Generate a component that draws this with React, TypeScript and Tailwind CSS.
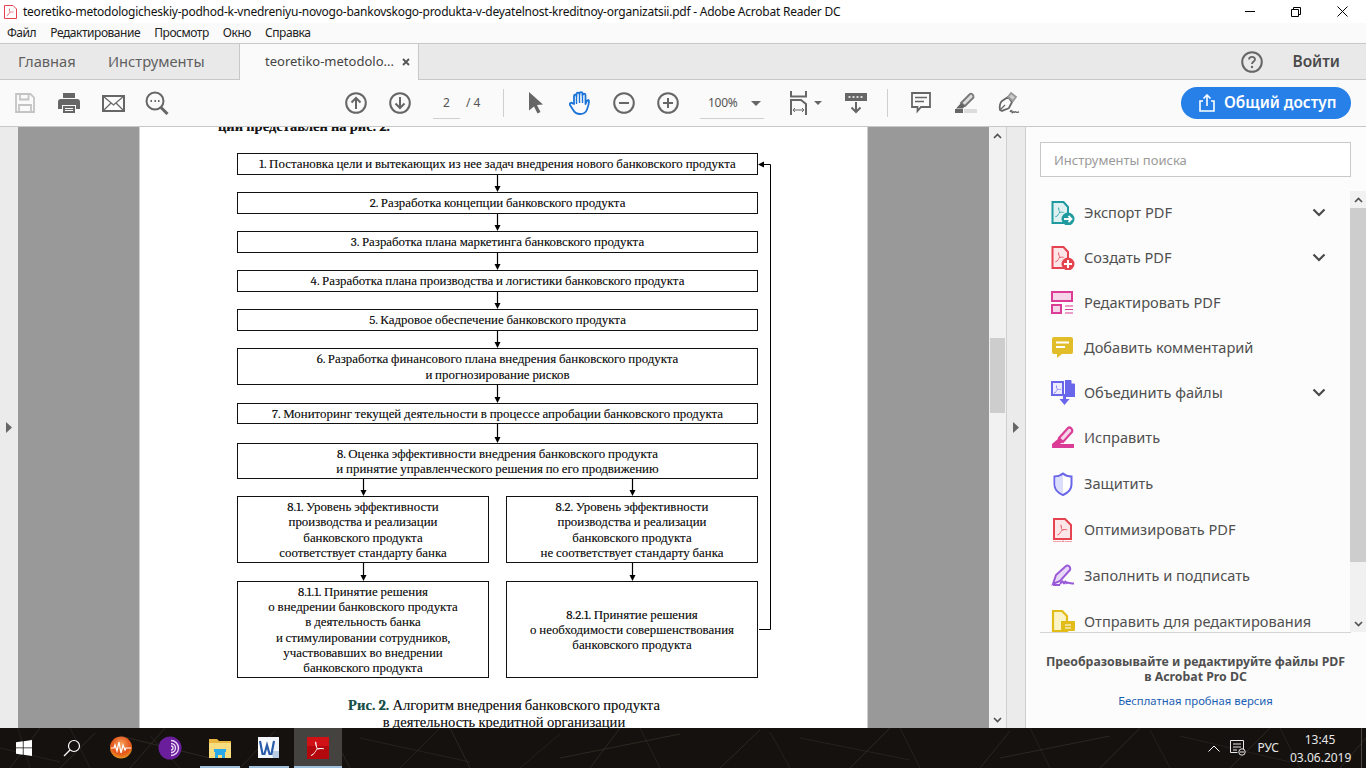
import React from "react";

const ui = "font-sans [font-family:Noto_Sans,Open_Sans,sans-serif]";
const GRAY = "#666666";

function PdfGlyph({ x = 0, y = 0, s = 1, c = "#e0e0e0" }: { x?: number; y?: number; s?: number; c?: string }) {
  return (
    <path
      transform={`translate(${x} ${y}) scale(${s})`}
      d="M5 0.5c-1 0-.8 3 1 6.5-1 2.5-3 5.5-5 6-1 .4-.8 1.5.3 1 1.7-.8 3.5-3 4.9-5.8 2.5-.8 4-.8 6-.4 1 .1 1-1 0-1-1.700-.2-3.600-.4-5.500.2C5.800 5 5.800.5 5 .5z"
      fill={c}
    />
  );
}

function ToolBtn({ children, w = 44 }: { children: React.ReactNode; w?: number }) {
  return (
    <div className="flex items-center justify-center h-full shrink-0" style={{ width: w }}>
      {children}
    </div>
  );
}

function CircleIcon({ kind }: { kind: "up" | "down" | "minus" | "plus" }) {
  return (
    <svg width="22" height="22" viewBox="0 0 22 22" fill="none" stroke={GRAY} strokeWidth="2">
      <circle cx="11" cy="11" r="9.800" />
      {kind === "up" && <path d="M11 17V6M6.500 10.500 11 6l4.500 4.500" />}
      {kind === "down" && <path d="M11 5v11M6.500 11.500 11 16l4.500-4.500" />}
      {(kind === "minus" || kind === "plus") && <path d="M6 11h10" />}
      {kind === "plus" && <path d="M11 6v10" />}
    </svg>
  );
}

function Arrow({ h }: { h: number }) {
  return (
    <svg width="9" height={h} viewBox={`0 0 9 ${h}`} className="block shrink-0">
      <path d={`M4.500 0V${h - 4}`} stroke="#000" strokeWidth="1.200" />
      <path d={`M1.500 ${h - 6}h6L4.500 ${h}z`} fill="#000" />
    </svg>
  );
}

function Box({ lines, h, w = 521 }: { lines: string[]; h: number; w?: number }) {
  return (
    <div
      className="border border-[#111] flex flex-col items-center justify-center text-center shrink-0 bg-white"
      style={{ height: h, width: w }}
    >
      {lines.map((l) => (
        <div key={l} className="leading-[15.200px] whitespace-nowrap">
          {l}
        </div>
      ))}
    </div>
  );
}

const PRODUCT = "банковского продукта";

function Document() {
  return (
    <div className="relative w-[729px] shrink-0 h-full bg-white border-x border-[#d0d0d0] overflow-hidden font-serif [font-family:Liberation_Serif,serif] text-[12.900px] text-[#161616] [text-shadow:0_0_0.5px_rgba(0,0,0,0.4)]">
      <div className="ml-[78px] -mt-[8px] h-[34px] text-[14.500px] font-bold leading-[16px] whitespace-nowrap">ции представлен на рис. 2.</div>
      <div className="ml-[97px] w-[521px] flex flex-col items-center">
        <Box h={22} lines={[`1. Постановка цели и вытекающих из нее задач внедрения нового ${PRODUCT}`]} />
        <Arrow h={17} />
        <Box h={22} lines={[`2. Разработка концепции ${PRODUCT}`]} />
        <Arrow h={17} />
        <Box h={22} lines={[`3. Разработка плана маркетинга ${PRODUCT}`]} />
        <Arrow h={17} />
        <Box h={22} lines={[`4. Разработка плана производства и логистики ${PRODUCT}`]} />
        <Arrow h={17} />
        <Box h={22} lines={[`5. Кадровое обеспечение ${PRODUCT}`]} />
        <Arrow h={17} />
        <Box h={37} lines={[`6. Разработка финансового плана внедрения ${PRODUCT}`, "и прогнозирование рисков"]} />
        <Arrow h={18} />
        <Box h={21} lines={[`7. Мониторинг текущей деятельности в процессе апробации ${PRODUCT}`]} />
        <Arrow h={19} />
        <Box h={36} lines={[`8. Оценка эффективности внедрения ${PRODUCT}`, "и принятие управленческого решения по его продвижению"]} />
        <div className="flex w-full justify-between">
          <div className="flex flex-col items-center w-[252px]">
            <Arrow h={17} />
            <Box w={252} h={67} lines={["8.1. Уровень эффективности", "производства и реализации", PRODUCT, "соответствует стандарту банка"]} />
            <Arrow h={18} />
            <Box w={252} h={97} lines={["8.1.1. Принятие решения", `о внедрении ${PRODUCT}`, "в деятельность банка", "и стимулировании сотрудников,", "участвовавших во внедрении", PRODUCT]} />
          </div>
          <div className="flex flex-col items-center w-[252px]">
            <Arrow h={17} />
            <Box w={252} h={67} lines={["8.2. Уровень эффективности", "производства и реализации", PRODUCT, "не соответствует стандарту банка"]} />
            <Arrow h={18} />
            <Box w={252} h={97} lines={["8.2.1. Принятие решения", "о необходимости совершенствования", PRODUCT]} />
          </div>
        </div>
        <div className="mt-[19px] w-full pl-[13px] text-center text-[14.600px] leading-[17px] whitespace-nowrap">
          <div><b className="text-[#17504a]">Рис. 2.</b> Алгоритм внедрения {PRODUCT}</div>
          <div>в деятельность кредитной организации</div>
        </div>
      </div>
      {/* feedback connector that runs over the page */}
      <svg className="absolute left-[617px] top-[30px]" width="16" height="480" viewBox="0 0 16 480" fill="none">
        <path d="M3 7.500H13.500V472.500H2" stroke="#000" strokeWidth="1" />
        <path d="M1 7.500l6-3v6z" fill="#000" />
      </svg>
    </div>
  );
}

function IcExport() {
  return (
    <svg width="24" height="24" viewBox="0 0 24 24" fill="none">
      <path d="M1.500 1h11l4.500 5v16h-15.500z" fill="#dff0f0" stroke="#1f9ba0" strokeWidth="2" />
      <PdfGlyph x={4} y={6} s={0.72} c="#1f9ba0" />
      <circle cx="17" cy="18" r="6.500" fill="#1f9ba0" />
      <path d="M13 18h7M17.500 15l3 3-3 3" stroke="#fff" strokeWidth="1.800" />
    </svg>
  );
}
function IcCreate() {
  return (
    <svg width="24" height="24" viewBox="0 0 24 24" fill="none">
      <path d="M1.500 1h11l4.500 5v16h-15.500z" fill="#fde6e8" stroke="#e5434f" strokeWidth="2" />
      <PdfGlyph x={4} y={6} s={0.72} c="#e5434f" />
      <circle cx="17" cy="18" r="6.500" fill="#e5434f" />
      <path d="M13 18h8M17 14v8" stroke="#fff" strokeWidth="2" />
    </svg>
  );
}
function IcEdit() {
  return (
    <svg width="24" height="24" viewBox="0 0 24 24" fill="none">
      <rect x="1" y="1" width="20" height="9" fill="#f7d5e8" stroke="#db3d96" strokeWidth="2" />
      <rect x="1" y="14" width="9" height="8" fill="#f7d5e8" stroke="#db3d96" strokeWidth="2" />
      <path d="M14 15h8M14 18.500h8M14 22h8" stroke="#db3d96" strokeWidth="1.200" />
    </svg>
  );
}
function IcComment() {
  return (
    <svg width="24" height="24" viewBox="0 0 24 24" fill="none">
      <path d="M3 1h17a2 2 0 0 1 2 2v13a2 2 0 0 1-2 2h-9l-5 4v-4H3a2 2 0 0 1-2-2V3a2 2 0 0 1 2-2z" fill="#e2bd2a" />
      <path d="M5 6.500h13M5 11h9" stroke="#fff" strokeWidth="2" />
    </svg>
  );
}
function IcCombine() {
  return (
    <svg width="25" height="25" viewBox="0 0 25 25" fill="none">
      <path d="M1 2h11v13H1z" fill="#ecebff" stroke="#6a66ea" strokeWidth="2" />
      <PdfGlyph x={2.500} y={5} s={0.6} c="#6a66ea" />
      <path d="M14 0h6l4 4v13H14z" fill="#6a66ea" />
      <path d="M20.500 0v3.500H24z" fill="#fcfcfc" />
      <path d="M13.500 14v6" stroke="#6a66ea" strokeWidth="3" />
      <path d="M8.500 19h10l-5 6z" fill="#6a66ea" />
    </svg>
  );
}
function IcFix() {
  return (
    <svg width="24" height="24" viewBox="0 0 24 24" fill="none">
      <path d="M8 12 17 2c2-1.500 5 1 4 4l-9 10z" fill="#f7d5e8" stroke="#db3d96" strokeWidth="2.200" />
      <path d="M8 12l4 4-3 2H1z" fill="#db3d96" />
      <rect x="11" y="18" width="12" height="4" fill="#db3d96" />
      <rect x="1" y="18" width="10" height="4" fill="#db3d96" />
    </svg>
  );
}
function IcShield() {
  return (
    <svg width="24" height="24" viewBox="0 0 24 24" fill="none">
      <path d="M12 1.500c2 1.800 5 3 8.500 3v8c0 5-4 8.500-8.500 10.500-4.500-2-8.500-5.500-8.500-10.500v-8c3.500 0 6.500-1.200 8.500-3z" fill="#fff" stroke="#6a66ea" strokeWidth="2" />
      <path d="M12 3v19c-4-2-7.500-5-7.500-9.500V5.500C7.500 5.500 10 4.500 12 3z" fill="#dcdcfb" />
    </svg>
  );
}
function IcOptimize() {
  return (
    <svg width="24" height="24" viewBox="0 0 24 24" fill="none">
      <path d="M3 1h11l6 6v14H3z" fill="#fde6e8" stroke="#e5434f" strokeWidth="2" />
      <PdfGlyph x={6} y={6} s={0.8} c="#e5434f" />
      <path d="M2 24h8M14 24h7" stroke="#e5434f" strokeWidth="1" />
      <circle cx="12" cy="24" r="1" stroke="#e5434f" strokeWidth="0.800" />
    </svg>
  );
}
function IcSign() {
  return (
    <svg width="25" height="24" viewBox="0 0 25 24" fill="none">
      <path d="M2 20 5 11 15 2c2-1.500 5 1 4 4L9 17z" fill="#e8d9f8" stroke="#9a5ad8" strokeWidth="2" />
      <path d="M2 21h7M9 20c2-2 2-4 3-2s1 2 2 0 1 2 2 1 1 0 2 0 3 .5 5 .5" stroke="#9a5ad8" strokeWidth="2" />
    </svg>
  );
}
function IcSend() {
  return (
    <svg width="24" height="24" viewBox="0 0 24 24" fill="none">
      <path d="M2 1h9l5 5v15H2z" fill="#fbf4c8" stroke="#e2bd1a" strokeWidth="2.200" />
      <path d="M10 11h13a1 1 0 0 1 1 1v8a1 1 0 0 1-1 1h-7l-3 3v-3h-3z" fill="#e2bd1a" />
      <path d="M14 15h6M14 18h6" stroke="#fff" strokeWidth="1.200" />
    </svg>
  );
}

const TOOLS: { icon: React.ReactNode; label: string; more?: boolean; y: number }[] = [
  { icon: <IcExport />, label: "Экспорт PDF", more: true, y: 45 },
  { icon: <IcCreate />, label: "Создать PDF", more: true, y: 45 },
  { icon: <IcEdit />, label: "Редактировать PDF", y: 45 },
  { icon: <IcComment />, label: "Добавить комментарий", y: 45 },
  { icon: <IcCombine />, label: "Объединить файлы", more: true, y: 45 },
  { icon: <IcFix />, label: "Исправить", y: 46 },
  { icon: <IcShield />, label: "Защитить", y: 46 },
  { icon: <IcOptimize />, label: "Оптимизировать PDF", y: 46 },
  { icon: <IcSign />, label: "Заполнить и подписать", y: 46 },
  { icon: <IcSend />, label: "Отправить для редактирования", y: 46 },
];

function RightPanel() {
  return (
    <div className={`w-[341px] h-full bg-[#fcfcfc] border-l border-[#cfcfcf] flex flex-col ${ui}`}>
      <div className="flex-1 min-h-0 flex flex-col relative overflow-hidden">
        <div className="h-[15px] shrink-0" />
        <div className="ml-[14px] w-[311px] h-[35px] shrink-0 bg-white border border-[#c9c9c9] flex items-center pl-[13px] pt-[2px] text-[13px] text-[#9a9a9a]">
          Инструменты поиска
        </div>
        <div className="h-[13px] shrink-0" />
        {TOOLS.map((t) => (
          <div key={t.label} className="flex items-center shrink-0 pl-[25px] w-[325px]" style={{ height: t.y }}>
            <div className="w-[33px] shrink-0 flex items-center">{t.icon}</div>
            <div className="flex-1 text-[14.600px] text-[#505050] whitespace-nowrap">{t.label}</div>
            {t.more && (
              <svg width="14" height="9" viewBox="0 0 14 9" fill="none" className="mr-[25px]">
                <path d="M1.500 1.500 7 7l5.500-5.500" stroke="#4a4a4a" strokeWidth="2.200" />
              </svg>
            )}
          </div>
        ))}
        {/* panel scrollbar */}
        <div className="absolute right-0 top-[64px] bottom-0 w-[16px] bg-[#f1f1f1] flex flex-col">
          <div className="h-[17px] bg-[#f1f1f1] flex items-center justify-center">
            <svg width="9" height="6" viewBox="0 0 9 6" fill="none"><path d="M1 5l3.500-3.500L8 5" stroke="#505050" strokeWidth="1.600" /></svg>
          </div>
          <div className="h-[354px] bg-[#cdcdcd]" />
          <div className="flex-1" />
          <div className="h-[16px] flex items-center justify-center">
            <svg width="9" height="6" viewBox="0 0 9 6" fill="none"><path d="M1 1l3.500 3.500L8 1" stroke="#505050" strokeWidth="1.600" /></svg>
          </div>
        </div>
      </div>
      <div className="h-[96px] w-[311px] shrink-0 ml-[14px] border-t border-[#d4d4d4] flex flex-col items-center">
        <div className="w-[311px] pt-[21px] text-center text-[12.300px] leading-[15px] font-bold text-[#505050] whitespace-nowrap">
          <div>Преобразовывайте и редактируйте файлы PDF</div>
          <div>в Acrobat Pro DC</div>
        </div>
        <div className="w-[311px] mt-[9px] text-center text-[11.300px] leading-[15px] text-[#1a5fb4]">Бесплатная пробная версия</div>
      </div>
    </div>
  );
}

function Strands() {
  const lines = [
    "M10 40 40 0", "M30 40 18 0", "M60 40 95 5", "M90 40 70 0", "M130 40 165 0", "M180 40 150 8", "M240 40 275 3", "M300 40 340 0",
    "M350 40 330 2", "M400 40 440 0", "M470 40 450 0", "M520 40 560 6", "M590 40 620 0", "M660 40 640 0", "M720 40 760 2", "M790 40 770 4",
    "M850 40 890 0", "M920 40 900 0", "M980 40 1010 3", "M1050 40 1030 0", "M1100 40 1140 0", "M1170 40 1150 2", "M1230 40 1270 0", "M1300 40 1280 0", "M1340 40 1366 10",
    "M0 20 60 34", "M120 8 210 30", "M360 10 470 34", "M560 30 680 6", "M800 10 910 32", "M1000 30 1110 8", "M1180 8 1290 34",
  ];
  return (
    <svg className="absolute inset-0 pointer-events-none" width="1366" height="40" viewBox="0 0 1366 40" fill="none">
      {lines.map((d, i) => (
        <path key={d} d={d} stroke={i % 2 ? "#2a2622" : "#332d26"} strokeWidth="0.800" />
      ))}
    </svg>
  );
}

function TaskItem({ w, children, active, open }: { w: number; children: React.ReactNode; active?: boolean; open?: boolean }) {
  return (
    <div className={`relative h-full flex items-center justify-center shrink-0 ${active ? "bg-[#45433f]" : ""}`} style={{ width: w }}>
      {children}
      {open && <div className="absolute left-0 right-0 bottom-0 h-[2px] bg-[#9fc0dc]" />}
    </div>
  );
}

function Taskbar() {
  return (
    <div className={`relative h-[40px] shrink-0 bg-[#14110e] flex items-stretch text-white overflow-hidden ${ui}`}>
      <Strands />
      <div className="relative flex h-full">
        <TaskItem w={48}>
          <svg width="16" height="16" viewBox="0 0 16 16" fill="#fff">
            <path d="M0 2.300 6.800 1.300V7.500H0zM7.600 1.200 16 0v7.500H7.600zM0 8.300h6.800v6.400L0 13.700zM7.600 8.300H16V16l-8.400-1.200z" />
          </svg>
        </TaskItem>
        <TaskItem w={48}>
          <svg width="18" height="18" viewBox="0 0 18 18" fill="none" stroke="#fff" strokeWidth="1.200">
            <circle cx="11" cy="7" r="5.500" />
            <path d="M7 11 1 17" />
          </svg>
        </TaskItem>
        <TaskItem w={49}>
          <svg width="24" height="24" viewBox="0 0 24 24" fill="none">
            <defs>
              <radialGradient id="orb" cx="50%" cy="35%" r="70%">
                <stop offset="0" stopColor="#f7a45c" />
                <stop offset="0.6" stopColor="#e4541c" />
                <stop offset="1" stopColor="#e8a220" />
              </radialGradient>
            </defs>
            <circle cx="12" cy="11.500" r="11" fill="url(#orb)" />
            <path d="M2 12h3l1-3 2 6 2-9 2 11 2-8 2 5 1-2h5" stroke="#fff" strokeWidth="1.200" />
          </svg>
        </TaskItem>
        <TaskItem w={49}>
          <svg width="24" height="24" viewBox="0 0 24 24" fill="none">
            <circle cx="12" cy="12" r="11.500" fill="#6a1e9c" />
            <path d="M13 4.500a7.500 7.500 0 0 1 0 15M13 7.500a4.500 4.500 0 0 1 0 9M13 10a2 2 0 0 1 0 4" stroke="#e8d8f4" strokeWidth="1.400" />
          </svg>
        </TaskItem>
        <div className="w-[6px]" />
        <TaskItem w={40} open>
          <svg width="24" height="22" viewBox="0 0 24 22" fill="none">
            <path d="M1 2h8l2 2h12v4H1z" fill="#e8b640" />
            <rect x="1" y="6" width="22" height="15" fill="#f8dc80" />
            <path d="M7 21v-6h10v6h-3v-3h-4v3z" fill="#2aa9e8" />
            <rect x="6" y="12" width="12" height="3" fill="#2aa9e8" />
          </svg>
        </TaskItem>
        <div className="w-[9px]" />
        <TaskItem w={40} open>
          <svg width="24" height="24" viewBox="0 0 24 24" fill="none">
            <rect x="1" y="1" width="21" height="21" fill="#f2f6fc" />
            <path d="M14 15h8v7h-6z" fill="#b8cce4" />
            <rect x="1" y="4" width="15" height="15" fill="#fff" />
            <path d="M3 5l2.500 13h2L10 9l2.500 9h2L17 5" stroke="#2a5caa" strokeWidth="2.200" />
          </svg>
        </TaskItem>
        <div className="w-[5px]" />
        <TaskItem w={48} active open>
          <svg width="22" height="22" viewBox="0 0 22 22" fill="none">
            <rect width="22" height="22" fill="#b3080d" />
            <rect width="22" height="9" fill="#d01217" />
            <PdfGlyph x={3.500} y={4} s={1.050} c="#fff" />
          </svg>
        </TaskItem>
      </div>
      <div className="relative ml-auto flex items-center h-full">
        <svg width="12" height="7" viewBox="0 0 12 7" fill="none" className="mr-[10px]"><path d="M.5 6.500 6 1l5.500 5.500" stroke="#fff" strokeWidth="1" /></svg>
        <svg width="16" height="16" viewBox="0 0 16 16" fill="none" stroke="#e8e8e8" strokeWidth="1" className="mr-[11px]">
          <path d="M.5.500h13v9M.5.500v12h7M3 4h8M3 7h8M3 10h4" />
          <circle cx="12" cy="12" r="3.200" fill="#14110e" />
          <path d="M10 12h4" />
        </svg>
        <div className="text-[12px] text-[#e8e8e8] mr-[11px]">РУС</div>
        <div className="w-[60px] pt-[1px] text-center text-[12px] leading-[18px] text-[#e8e8e8] mr-[11px]">
          <div>13:45</div>
          <div>03.06.2019</div>
        </div>
        <div className="w-px h-full bg-[#4a4640] mr-[4px]" />
      </div>
    </div>
  );
}

export default function App() {
  return (
    <div className={`w-[1366px] h-[768px] overflow-hidden flex flex-col bg-white ${ui}`}>
      {/* title bar */}
      <div className="h-[23px] shrink-0 bg-white flex items-center text-[12px] text-[#111]">
        <svg width="13" height="14" viewBox="0 0 13 14" fill="none" className="ml-[4px] mr-[6px]">
          <path d="M.5.500h8.500l3.500 3.500v9.500H.5z" fill="#fff" stroke="#e5434f" />
          <PdfGlyph x={2.500} y={3} s={0.55} c="#d8232e" />
        </svg>
        <span className="whitespace-nowrap tracking-[-0.24px]">teoretiko-metodologicheskiy-podhod-k-vnedreniyu-novogo-bankovskogo-produkta-v-deyatelnost-kreditnoy-organizatsii.pdf - Adobe Acrobat Reader DC</span>
        <div className="ml-auto flex h-full items-center pr-[1px]">
          <div className="w-[46px] flex justify-center"><div className="w-[10px] h-px bg-black" /></div>
          <div className="w-[46px] flex justify-center">
            <svg width="10" height="10" viewBox="0 0 10 10" fill="none" stroke="#000"><path d="M.5 2.500h7v7h-7zM2.500 2.500v-2h7v7h-2" /></svg>
          </div>
          <div className="w-[46px] flex justify-center">
            <svg width="11" height="11" viewBox="0 0 11 11" fill="none" stroke="#000"><path d="M.5.500l10 10M10.500.500l-10 10" /></svg>
          </div>
        </div>
      </div>
      {/* menu */}
      <div className="h-[20px] shrink-0 bg-[#fafafa] flex items-center pl-[7px] gap-[14px] text-[12px] tracking-[-0.45px] text-[#222]">
        <span>Файл</span>
        <span>Редактирование</span>
        <span>Просмотр</span>
        <span>Окно</span>
        <span>Справка</span>
      </div>
      {/* tabs */}
      <div className="h-[37px] shrink-0 bg-[#e9e9e9] border-y border-[#c8c8c8] flex text-[14.700px] text-[#5f5f5f]">
        <div className="pl-[18px] w-[108px] flex items-center">Главная</div>
        <div className="w-[131px] flex items-center">Инструменты</div>
        <div className="w-[180px] h-[36px] bg-[#fafafa] border-x border-[#c8c8c8] flex items-center pl-[25px] pr-[8px] text-[13px] text-[#444] relative">
          <span className="whitespace-nowrap">teoretiko-metodolo...</span>
          <svg width="8" height="8" viewBox="0 0 8 8" className="ml-auto" fill="none" stroke="#555" strokeWidth="1.800"><path d="M1 1l6 6M7 1 1 7" /></svg>
        </div>
        <div className="ml-auto flex items-center">
          <svg width="22" height="22" viewBox="0 0 22 22" fill="none" className="mr-[29px]">
            <circle cx="11" cy="11" r="9.800" stroke={GRAY} strokeWidth="2" />
            <path d="M8 8.500c0-3.500 6-3.500 6 0 0 2-3 2-3 4.500" stroke={GRAY} strokeWidth="1.800" />
            <circle cx="11" cy="16" r="1.200" fill={GRAY} />
          </svg>
          <span className="font-semibold text-[15.500px] text-[#4b4b4b] mr-[26px]">Войти</span>
        </div>
      </div>
      {/* toolbar */}
      <div className="h-[47px] shrink-0 bg-[#fafafa] border-b border-[#c8c8c8] flex items-center pl-[3px]">
        <ToolBtn>
          <svg width="20" height="20" viewBox="0 0 20 20" fill="none" stroke="#c4c4c4" strokeWidth="1.800">
            <path d="M1 1h14.500L19 4.500V19H1z" />
            <path d="M5 1v5.500h8.500V1M4 19v-7h12v7" />
          </svg>
        </ToolBtn>
        <ToolBtn>
          <svg width="22" height="20" viewBox="0 0 22 20" fill="#666">
            <path d="M5 0h12v5H5z" />
            <path d="M3 6h16a3 3 0 0 1 3 3v7h-4v-4H4v4H0V9a3 3 0 0 1 3-3z" />
            <path d="M5 13h12v7H5zm2 2v1h8v-1zm0 2v1h8v-1z" fillRule="evenodd" />
          </svg>
        </ToolBtn>
        <ToolBtn>
          <svg width="23" height="17" viewBox="0 0 23 17" fill="none" stroke="#666">
            <rect x="1" y="1" width="21" height="15" strokeWidth="2" />
            <path d="M1 1l10.500 9L22 1M1 16l8-8M22 16l-8-8" strokeWidth="1.200" />
          </svg>
        </ToolBtn>
        <ToolBtn>
          <svg width="24" height="24" viewBox="0 0 24 24" fill="none" stroke="#666">
            <circle cx="10" cy="10" r="8.500" strokeWidth="2" />
            <path d="M15.500 16l7 7" strokeWidth="3" />
            <path d="M5.500 10h1.500M9.500 10H11M13 10h1.500" strokeWidth="1.800" />
          </svg>
        </ToolBtn>
        <div className="w-[155px] shrink-0" />
        <ToolBtn><CircleIcon kind="up" /></ToolBtn>
        <ToolBtn><CircleIcon kind="down" /></ToolBtn>
        <div className="ml-[11px] w-[27px] h-[30px] mt-[1px] border-b border-[#cfcfcf] flex items-center justify-center text-[12px] text-[#555] shrink-0">2</div>
        <div className="ml-[6px] w-[21px] text-[12px] text-[#555] whitespace-nowrap shrink-0">/&nbsp;4</div>
        <div className="ml-[16px] w-px h-[28px] bg-[#cfcfcf] shrink-0" />
        <ToolBtn w={64}>
          <svg width="14" height="22" viewBox="0 0 14 22" fill="#666"><path d="M0 0l14 12.500-6 .5 3.500 7-3 1.500L5 14.500l-5 4z" /></svg>
        </ToolBtn>
        <ToolBtn w={24}>
          <svg width="22" height="24" viewBox="0 0 22 24" fill="none" stroke="#1a74d8" strokeWidth="1.800" strokeLinejoin="round">
            <path d="M5 13V5c0-1.800 2.500-1.800 2.500 0V3c0-1.800 3-1.800 3 0v-.5c0-1.800 3-1.800 3 0V4c0-1.800 3-1.800 3 0v9c1-2 1-4 3-4 1 2-.5 7-1.500 9.500-1 3-3.500 4.500-7 4.500-3 0-5-1-6.500-3.500L1 14c-1-2 1.500-3 2.500-1.500z" />
            <path d="M7.500 5v8M10.500 3v9M13.500 3v9" strokeWidth="1.400" />
          </svg>
        </ToolBtn>
        <ToolBtn w={64}><CircleIcon kind="minus" /></ToolBtn>
        <ToolBtn w={24}><CircleIcon kind="plus" /></ToolBtn>
        <div className="ml-[20px] w-[64px] h-[30px] mt-[1px] border-b border-[#cfcfcf] flex items-center justify-between pl-[8px] pr-[3px] text-[12px] text-[#555] shrink-0">
          <span className="tracking-[-0.3px]">100%</span>
          <svg width="10" height="5" viewBox="0 0 10 5" fill="#666"><path d="M0 0h10L5 5z" /></svg>
        </div>
        <div className="ml-[26px] shrink-0 flex items-center">
          <svg width="18" height="24" viewBox="0 0 18 24" fill="none" stroke="#666">
            <path d="M1 0v5.500h15V0" strokeWidth="2" />
            <path d="M1 24V9h10l5 4v11" strokeWidth="2" />
            <path d="M3 19h11M5 17l-2 2 2 2M12 17l2 2-2 2" strokeWidth="1" />
          </svg>
        </div>
        <svg width="8" height="4" viewBox="0 0 8 4" fill="#666" className="ml-[6px] shrink-0"><path d="M0 0h8L4 4z" /></svg>
        <div className="ml-[23px] shrink-0 flex items-center">
          <svg width="22" height="22" viewBox="0 0 22 22" fill="none">
            <rect x="0" y="1" width="22" height="8" fill="#666" />
            <path d="M3.500 5h2M7.500 5h2M11.500 5h2M15.500 5h2" stroke="#fff" strokeWidth="1.500" />
            <path d="M11 10v10M6.500 15.500 11 20l4.500-4.500" stroke="#666" strokeWidth="2" />
          </svg>
        </div>
        <div className="ml-[20px] w-px h-[28px] bg-[#cfcfcf] shrink-0" />
        <ToolBtn w={66}>
          <svg width="20" height="22" viewBox="0 0 20 22" fill="none" stroke="#666" strokeWidth="1.800">
            <path d="M1 1h18v14h-9l-3.500 4v-4H1z" />
            <path d="M4 5.500h12M4 9.500h9" strokeWidth="1.500" />
          </svg>
        </ToolBtn>
        <ToolBtn w={23}>
          <svg width="22" height="22" viewBox="0 0 22 22" fill="none">
            <path d="M6 11 15 2c1.500-1 4 1 3.500 3.500L10 14z" fill="#dcdcdc" stroke="#777" strokeWidth="1.800" />
            <path d="M6 11l4 3-2 2.500H1z" fill="#666" />
            <rect x="9" y="17" width="13" height="4" fill="#dcdcdc" />
            <rect y="17" width="8" height="4" fill="#666" />
          </svg>
        </ToolBtn>
        <ToolBtn w={63}>
          <svg width="23" height="22" viewBox="0 0 23 22" fill="none" stroke="#666" strokeWidth="1.800">
            <path d="M3 18c-1-4 .5-8 2-9l6-4 4 5-3 6c-1.500 1-5 2-7 3z" />
            <path d="M11 5l3-4 5 4-3 4z" fill="#ccc" stroke="#999" />
            <path d="M3 18l5-5" strokeWidth="1.200" />
            <path d="M13 20c1-2 2-2 2 0s1.500-1 2 0 1.500-1 2 0 1 0 3 0" strokeWidth="1.400" />
          </svg>
        </ToolBtn>
        <div className="ml-[141px] w-[170px] h-[32px] rounded-full bg-[#2680e8] flex items-center pl-[18px] text-white shrink-0">
          <svg width="16" height="18" viewBox="0 0 16 18" fill="none" stroke="#fff" strokeWidth="1.600" className="mr-[9px]">
            <path d="M4 7H1v10h14V7h-3M8 12V1M4.500 4.500 8 1l3.500 3.500" />
          </svg>
          <span className="text-[15.400px] font-semibold whitespace-nowrap">Общий доступ</span>
        </div>
      </div>
      {/* workspace */}
      <div className="flex-1 min-h-0 flex">
        <div className="w-[18px] shrink-0 bg-[#ebebeb] flex items-center justify-center">
          <svg width="6" height="11" viewBox="0 0 6 11" fill="#666"><path d="M0 0l6 5.500L0 11z" /></svg>
        </div>
        <div className="w-[121px] shrink-0 bg-[#999999]" />
        <Document />
        <div className="w-[121px] shrink-0 bg-[#999999]" />
        <div className="w-[17px] shrink-0 bg-[#f1f1f1] flex flex-col">
          <div className="h-[17px] flex items-center justify-center">
            <svg width="9" height="6" viewBox="0 0 9 6" fill="none"><path d="M1 5l3.500-3.500L8 5" stroke="#505050" strokeWidth="1.600" /></svg>
          </div>
          <div className="mt-[194px] h-[75px] mx-[1px] bg-[#cdcdcd]" />
          <div className="flex-1" />
          <div className="h-[17px] flex items-center justify-center">
            <svg width="9" height="6" viewBox="0 0 9 6" fill="none"><path d="M1 1l3.500 3.500L8 1" stroke="#505050" strokeWidth="1.600" /></svg>
          </div>
        </div>
        <div className="w-[19px] shrink-0 bg-[#ebebeb] border-l border-[#cfcfcf] flex items-center justify-center">
          <svg width="6" height="11" viewBox="0 0 6 11" fill="#666"><path d="M0 0l6 5.500L0 11z" /></svg>
        </div>
        <RightPanel />
      </div>
      <Taskbar />
    </div>
  );
}
